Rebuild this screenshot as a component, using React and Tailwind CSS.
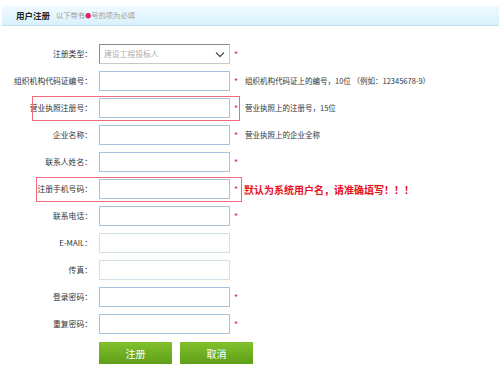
import React from 'react';

const rows = [
    { label: '组织机构代码证编号：', req: true, hint: '组织机构代码证上的编号，10位 （例如：12345678-9）' },
    { label: '营业执照注册号：', req: true, hint: '营业执照上的注册号，15位', mark: true },
    { label: '企业名称：', req: true, hint: '营业执照上的企业全称' },
    { label: '联系人姓名：', req: true },
    { label: '注册手机号码：', req: true, big: '默认为系统用户名，请准确填写！！！', mark: true, wide: true },
    { label: '联系电话：', req: true },
    { label: 'E-MAIL：', req: false, light: true },
    { label: '传真：', req: false, light: true },
    { label: '登录密码：', req: true },
    { label: '重复密码：', req: true },
];

const Star = () => <span className="w-[10px] ml-[4px] text-[9px] text-[#e0245a] leading-none">*</span>;

const App = () => {
    return (
        <div className="w-[504px] h-[374px] bg-white overflow-hidden" style={{ fontFamily: '"Noto Sans CJK SC", "Noto Sans", sans-serif' }}>
            <div className="ml-[2px] mt-[6px] w-[497px] h-[20px] flex items-center gap-[6px] px-[14px] bg-gradient-to-b from-[#f0faff] to-[#d9f1fd] border-b border-[#c3dfee]">
                <span className="text-[8.5px] font-bold text-[#222]">用户注册</span>
                <span className="text-[7.3px] text-[#a0a0a0]">以下带有<span className="text-[#e0245a] text-[6px]">●</span>号的项为必填</span>
            </div>

            <div className="mt-[18px] flex flex-col gap-[7px]">
                <div className="flex items-center h-[20px]">
                    <div className="w-[92px] text-right text-[7.8px] text-[#333]">注册类型：</div>
                    <div className="ml-[7px] w-[131px] h-[20px] flex items-center justify-between border border-[#8a8a8a] border-r-[#c8c8c8] border-b-[#c8c8c8] px-[4px]">
                        <span className="text-[7.8px] text-[#aaa]">建设工程投标人</span>
                        <svg width="10" height="7" viewBox="0 0 10 7"><path d="M1 1.5 L5 5.5 L9 1.5" fill="none" stroke="#555" strokeWidth="1.3" /></svg>
                    </div>
                    <Star />
                </div>

                {rows.map((r, i) => (
                    <div key={i} className="relative flex items-center h-[20px]">
                        {r.mark && (
                            <div className={`absolute top-[-2px] h-[25px] border border-[#ef6b7b] ${r.wide ? 'left-[36px] w-[206px]' : 'left-[32px] w-[208px]'}`} />
                        )}
                        <div className="w-[92px] text-right text-[7.8px] text-[#333] whitespace-nowrap">{r.label}</div>
                        <div className={`ml-[7px] w-[131px] h-[20px] border ${r.light ? 'border-[#d2e0ea]' : 'border-[#a4c3df]'} bg-white`} />
                        {r.req ? <Star /> : <span className="w-[14px]" />}
                        {r.hint && <span className="ml-[1px] text-[7.5px] text-[#333] whitespace-nowrap">{r.hint}</span>}
                        {r.big && <span className="text-[10px] font-bold text-[#e8101f] whitespace-nowrap">{r.big}</span>}
                    </div>
                ))}

                <div className="flex gap-[8px] ml-[99px] mt-[1px]">
                    <button className="w-[73px] h-[22px] bg-gradient-to-b from-[#82c12c] to-[#5f9f18] text-white text-[10px]">注册</button>
                    <button className="w-[73px] h-[22px] bg-gradient-to-b from-[#82c12c] to-[#5f9f18] text-white text-[10px]">取消</button>
                </div>
            </div>
        </div>
    );
};

export default App;
